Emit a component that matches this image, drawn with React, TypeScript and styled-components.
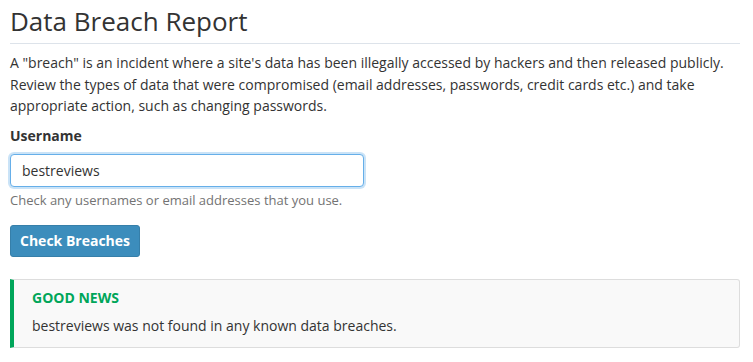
import React from 'react'
import styled, { createGlobalStyle } from 'styled-components'

const GlobalStyle = createGlobalStyle`
  html, body {
    margin: 0;
    padding: 0;
    background: #fff;
  }
  body {
    font-family: 'Open Sans', 'Noto Sans', sans-serif;
    color: #333;
  }
  * {
    box-sizing: border-box;
  }
`

const Page = styled.div`
  width: 730px;
  margin-left: 10px;
  padding-top: 4px;
`

const Title = styled.h1`
  margin: 0;
  font-size: 26px;
  font-weight: 400;
  line-height: 34px;
  color: #333;
  padding-bottom: 5px;
  border-bottom: 1px solid #dde3ea;
`

const Intro = styled.p`
  margin: 8px 0 0;
  font-size: 14px;
  line-height: 21.5px;
  color: #333;
`

const FormGroup = styled.div`
  margin-top: 9px;
  display: flex;
  flex-direction: column;
  align-items: flex-start;
`

const Label = styled.label`
  font-size: 14px;
  font-weight: 700;
  line-height: 20px;
  color: #333;
`

const Input = styled.input`
  margin-top: 8px;
  width: 354px;
  height: 33px;
  padding: 0 11px;
  font-family: inherit;
  font-size: 14px;
  color: #333;
  border: 1px solid #66afe9;
  border-radius: 4px;
  outline: none;
  box-shadow: 0 0 0 2px rgba(102, 175, 233, 0.35);
`

const Help = styled.span`
  margin-top: 4px;
  font-size: 13px;
  line-height: 18px;
  color: #737373;
`

const Button = styled.button`
  margin-top: 16px;
  height: 32px;
  padding: 0 9px;
  font-family: inherit;
  font-size: 14px;
  font-weight: 700;
  color: #fff;
  background: #3c8dbc;
  border: 1px solid #367fa9;
  border-radius: 3px;
  cursor: pointer;
`

const Callout = styled.div<{ $accent: string }>`
  margin-top: 22px;
  padding: 8px 20px 11px 18px;
  background: #f9f9f9;
  border: 1px solid #ddd;
  border-left: 4px solid ${p => p.$accent};
  border-radius: 0 3px 3px 0;
`

const CalloutTitle = styled.div<{ $accent: string }>`
  font-size: 14px;
  font-weight: 700;
  line-height: 20px;
  color: ${p => p.$accent};
`

const CalloutText = styled.div`
  margin-top: 8px;
  font-size: 14px;
  line-height: 20px;
  color: #333;
`

export default function App() {
  const username = 'bestreviews'
  return (
    <>
      <GlobalStyle />
      <Page>
        <Title>Data Breach Report</Title>
        <Intro>
          A "breach" is an incident where a site's data has been illegally accessed by hackers and then released publicly.
          Review the types of data that were compromised (email addresses, passwords, credit cards etc.) and take
          appropriate action, such as changing passwords.
        </Intro>
        <FormGroup>
          <Label htmlFor="username">Username</Label>
          <Input id="username" defaultValue={username} />
          <Help>Check any usernames or email addresses that you use.</Help>
          <Button>Check Breaches</Button>
        </FormGroup>
        <Callout $accent="#00a65a">
          <CalloutTitle $accent="#00a65a">GOOD NEWS</CalloutTitle>
          <CalloutText>{username} was not found in any known data breaches.</CalloutText>
        </Callout>
      </Page>
    </>
  )
}
